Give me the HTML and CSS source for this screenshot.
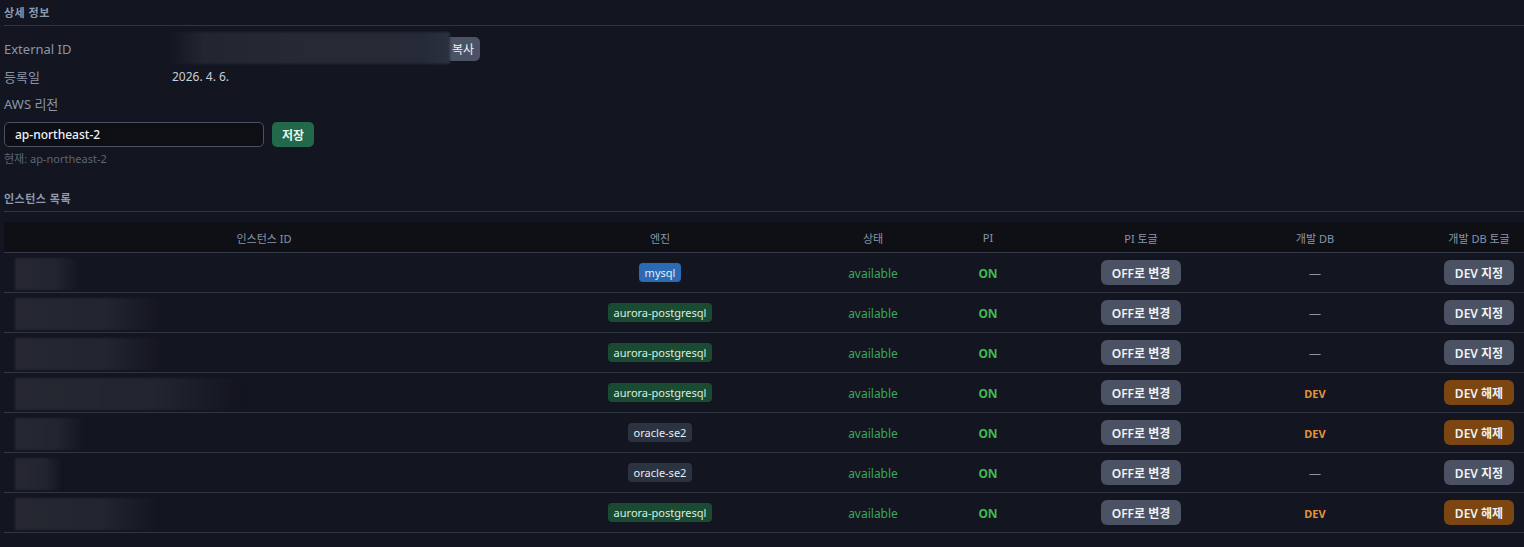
FILE: index.html
```html
<!DOCTYPE html>
<html lang="ko">
<head>
<meta charset="utf-8">
<title>상세 정보</title>
<link rel="stylesheet" href="styles.css">
</head>
<body>
<div class="page">
  <h2 class="section-title">상세 정보</h2>
  <div class="details">
    <div class="ext-row">
      <span class="label">External ID</span>
      <span class="redacted ext-id"></span>
      <button class="btn btn-gray btn-copy">복사</button>
    </div>
    <div class="info-row">
      <span class="label">등록일</span>
      <span class="value">2026. 4. 6.</span>
    </div>
    <div class="label region-label">AWS 리전</div>
    <div class="region-row">
      <input class="region-input" type="text" value="ap-northeast-2">
      <button class="btn btn-green btn-save">저장</button>
    </div>
    <div class="hint">현재: ap-northeast-2</div>
  </div>

  <h2 class="section-title list-title">인스턴스 목록</h2>
  <div class="table-wrap">
    <div class="grid">
      <div class="grow head">
        <div class="cell">인스턴스 ID</div>
        <div class="cell">엔진</div>
        <div class="cell">상태</div>
        <div class="cell">PI</div>
        <div class="cell">PI 토글</div>
        <div class="cell">개발 DB</div>
        <div class="cell">개발 DB 토글</div>
      </div>

      <div class="grow">
        <div class="cell id"><span class="redacted" style="width:66px"></span></div>
        <div class="cell"><span class="badge badge-blue">mysql</span></div>
        <div class="cell txt status">available</div>
        <div class="cell txt on">ON</div>
        <div class="cell"><button class="btn btn-gray btn-row">OFF로 변경</button></div>
        <div class="cell txt dash">—</div>
        <div class="cell"><button class="btn btn-gray btn-dev">DEV 지정</button></div>
      </div>

      <div class="grow">
        <div class="cell id"><span class="redacted" style="width:150px"></span></div>
        <div class="cell"><span class="badge badge-green">aurora-postgresql</span></div>
        <div class="cell txt status">available</div>
        <div class="cell txt on">ON</div>
        <div class="cell"><button class="btn btn-gray btn-row">OFF로 변경</button></div>
        <div class="cell txt dash">—</div>
        <div class="cell"><button class="btn btn-gray btn-dev">DEV 지정</button></div>
      </div>

      <div class="grow">
        <div class="cell id"><span class="redacted" style="width:150px"></span></div>
        <div class="cell"><span class="badge badge-green">aurora-postgresql</span></div>
        <div class="cell txt status">available</div>
        <div class="cell txt on">ON</div>
        <div class="cell"><button class="btn btn-gray btn-row">OFF로 변경</button></div>
        <div class="cell txt dash">—</div>
        <div class="cell"><button class="btn btn-gray btn-dev">DEV 지정</button></div>
      </div>

      <div class="grow">
        <div class="cell id"><span class="redacted" style="width:228px"></span></div>
        <div class="cell"><span class="badge badge-green">aurora-postgresql</span></div>
        <div class="cell txt status">available</div>
        <div class="cell txt on">ON</div>
        <div class="cell"><button class="btn btn-gray btn-row">OFF로 변경</button></div>
        <div class="cell txt dev">DEV</div>
        <div class="cell"><button class="btn btn-brown btn-dev">DEV 해제</button></div>
      </div>

      <div class="grow">
        <div class="cell id"><span class="redacted" style="width:70px"></span></div>
        <div class="cell"><span class="badge badge-slate">oracle-se2</span></div>
        <div class="cell txt status">available</div>
        <div class="cell txt on">ON</div>
        <div class="cell"><button class="btn btn-gray btn-row">OFF로 변경</button></div>
        <div class="cell txt dev">DEV</div>
        <div class="cell"><button class="btn btn-brown btn-dev">DEV 해제</button></div>
      </div>

      <div class="grow">
        <div class="cell id"><span class="redacted" style="width:48px"></span></div>
        <div class="cell"><span class="badge badge-slate">oracle-se2</span></div>
        <div class="cell txt status">available</div>
        <div class="cell txt on">ON</div>
        <div class="cell"><button class="btn btn-gray btn-row">OFF로 변경</button></div>
        <div class="cell txt dash">—</div>
        <div class="cell"><button class="btn btn-gray btn-dev">DEV 지정</button></div>
      </div>

      <div class="grow">
        <div class="cell id"><span class="redacted" style="width:146px"></span></div>
        <div class="cell"><span class="badge badge-green">aurora-postgresql</span></div>
        <div class="cell txt status">available</div>
        <div class="cell txt on">ON</div>
        <div class="cell"><button class="btn btn-gray btn-row">OFF로 변경</button></div>
        <div class="cell txt dev">DEV</div>
        <div class="cell"><button class="btn btn-brown btn-dev">DEV 해제</button></div>
      </div>
    </div>
  </div>
</div>
</body>
</html>
```

FILE: styles.css
```css
* {
  box-sizing: border-box;
}

html, body {
  margin: 0;
  padding: 0;
  background: #131520;
  overflow: hidden;
}

body {
  font-family: "Noto Sans", "Noto Sans CJK KR", sans-serif;
  color: #c9d1d9;
  font-size: 13px;
}

.page {
  padding: 0 0 0 4px;
  width: 1524px;
}

.section-title {
  margin: 0;
  padding: 5px 0 4px;
  line-height: 16px;
  font-size: 11px;
  font-weight: 700;
  color: #8d9bb0;
  letter-spacing: 0.5px;
  border-bottom: 1px solid #2f3541;
}

.details {
  padding-top: 6px;
}

.label {
  color: #8b96a8;
  font-size: 13px;
}

.ext-row {
  display: flex;
  align-items: center;
  height: 32px;
  padding-top: 1px;
}

.ext-row .label {
  width: 164px;
  flex: none;
}

.redacted {
  display: block;
  height: 32px;
  background: linear-gradient(90deg, rgba(40,42,53,0.9) 0%, rgba(38,41,52,0.85) 60%, rgba(19,21,32,0) 100%);
  filter: blur(1px);
}

.ext-id {
  width: 282px;
  margin-top: -1px;
  background: linear-gradient(90deg, rgba(19,21,32,0) 0%, #232631 12%, #262a35 50%, #252a36 90%, #2b3140 100%);
}

.btn {
  font-family: "Noto Sans", "Noto Sans CJK KR", sans-serif;
  border: none;
  color: #f0f3f6;
  font-weight: 600;
  font-size: 12px;
  border-radius: 5px;
  padding: 0;
  cursor: pointer;
}

.btn-gray {
  background: #4a5263;
}

.btn-green {
  background: #21694a;
  color: #e8f5ee;
}

.btn-brown {
  background: #7b4612;
}

.btn-copy {
  width: 34px;
  height: 24px;
  margin-left: -4px;
  font-weight: 400;
}

.info-row {
  display: flex;
  margin-top: 3px;
  line-height: 20px;
}

.info-row .label {
  width: 168px;
}

.value {
  color: #c5cfdc;
  font-size: 12px;
}

.region-label {
  margin-top: 7px;
  line-height: 20px;
}

.region-row {
  display: flex;
  gap: 8px;
  margin-top: 8px;
}

.region-input {
  width: 260px;
  height: 25px;
  background: #0d0f15;
  border: 1px solid #4a5160;
  border-radius: 5px;
  color: #f0f3f6;
  font-family: "Noto Sans", sans-serif;
  font-size: 12px;
  font-weight: 500;
  padding: 0 10px;
  outline: none;
}

.btn-save {
  width: 42px;
  height: 25px;
  font-size: 12px;
}

.hint {
  margin-top: 5px;
  line-height: 14px;
  font-size: 11px;
  color: #5b6577;
}

.list-title {
  margin-top: 20px;
}

.table-wrap {
  margin-top: 10px;
  overflow: hidden;
}

.grid {
  width: 1580px;
}

.grow {
  display: grid;
  grid-template-columns: 520px 272px 154px 76px 230px 118px 210px;
  height: 40px;
  border-bottom: 1px solid #2f3541;
  align-items: center;
}

.grow.head {
  height: 31px;
  background: #0f1015;
  border-bottom: 1px solid #343a47;
}

.head .cell {
  font-size: 11px;
  color: #8696ab;
  padding-top: 1px;
}

.cell {
  text-align: center;
  font-size: 12px;
  display: flex;
  justify-content: center;
  align-items: center;
}

.cell.txt {
  padding-top: 2px;
}

.cell.id {
  justify-content: flex-start;
  padding-left: 11px;
  margin-top: 3px;
}

.badge {
  display: inline-block;
  height: 19px;
  line-height: 19px;
  padding: 0 6px;
  border-radius: 4px;
  font-size: 11px;
  color: #e6edf3;
}

.badge-blue {
  background: #2a6bb3;
}

.badge-green {
  background: #1b4a32;
  color: #d7efe0;
}

.badge-slate {
  background: #2b3341;
}

.status {
  color: #3aa856;
}

.on {
  color: #3fb950;
  font-weight: 700;
}

.dash {
  color: #8b949e;
}

.dev {
  color: #e39439;
  font-weight: 700;
  font-size: 11px;
}

.btn-row {
  width: 80px;
  height: 25px;
  border-radius: 6px;
}

.btn-dev {
  width: 70px;
  height: 25px;
  border-radius: 6px;
}
```
